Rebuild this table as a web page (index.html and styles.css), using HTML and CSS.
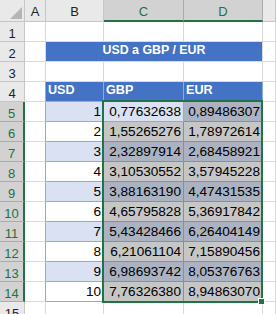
FILE: index.html
```html
<!DOCTYPE html>
<html>
<head>
    <title>USD a GBP / EUR</title>
    <link rel="stylesheet" href="styles.css">
</head>
<body>
    <div class="sheet">
        <!-- column headers -->
        <div class="corner">
            <svg width="24" height="21" viewBox="0 0 24 21"><polygon points="22,7 22,19 10,19" fill="#b5b5b5"/></svg>
        </div>
        <div class="ch">A</div>
        <div class="ch">B</div>
        <div class="ch ch-sel">C</div>
        <div class="ch ch-sel">D</div>
        <div class="ch"></div>

        <!-- row 1 -->
        <div class="rh">1</div>
        <div class="c"></div><div class="c"></div><div class="c"></div><div class="c"></div><div class="c"></div>

        <!-- row 2 -->
        <div class="rh">2</div>
        <div class="c"></div>
        <div class="c title">USD a GBP / EUR</div>
        <div class="c"></div>

        <!-- row 3 -->
        <div class="rh">3</div>
        <div class="c"></div><div class="c"></div><div class="c"></div><div class="c"></div><div class="c"></div>

        <!-- row 4 -->
        <div class="rh">4</div>
        <div class="c edge"></div>
        <div class="c head">USD</div>
        <div class="c head">GBP</div>
        <div class="c head">EUR</div>
        <div class="c"></div>

        <div class="rh rh-sel">5</div>
        <div class="c edge"></div>
        <div class="c t band num">1</div>
        <div class="c t band num">0,77632638</div>
        <div class="c t band sel num">0,89486307</div>
        <div class="c"></div>

        <div class="rh rh-sel">6</div>
        <div class="c edge"></div>
        <div class="c t num">2</div>
        <div class="c t sel num">1,55265276</div>
        <div class="c t sel num">1,78972614</div>
        <div class="c"></div>

        <div class="rh rh-sel">7</div>
        <div class="c edge"></div>
        <div class="c t band num">3</div>
        <div class="c t band sel num">2,32897914</div>
        <div class="c t band sel num">2,68458921</div>
        <div class="c"></div>

        <div class="rh rh-sel">8</div>
        <div class="c edge"></div>
        <div class="c t num">4</div>
        <div class="c t sel num">3,10530552</div>
        <div class="c t sel num">3,57945228</div>
        <div class="c"></div>

        <div class="rh rh-sel">9</div>
        <div class="c edge"></div>
        <div class="c t band num">5</div>
        <div class="c t band sel num">3,88163190</div>
        <div class="c t band sel num">4,47431535</div>
        <div class="c"></div>

        <div class="rh rh-sel">10</div>
        <div class="c edge"></div>
        <div class="c t num">6</div>
        <div class="c t sel num">4,65795828</div>
        <div class="c t sel num">5,36917842</div>
        <div class="c"></div>

        <div class="rh rh-sel">11</div>
        <div class="c edge"></div>
        <div class="c t band num">7</div>
        <div class="c t band sel num">5,43428466</div>
        <div class="c t band sel num">6,26404149</div>
        <div class="c"></div>

        <div class="rh rh-sel">12</div>
        <div class="c edge"></div>
        <div class="c t num">8</div>
        <div class="c t sel num">6,21061104</div>
        <div class="c t sel num">7,15890456</div>
        <div class="c"></div>

        <div class="rh rh-sel">13</div>
        <div class="c edge"></div>
        <div class="c t band num">9</div>
        <div class="c t band sel num">6,98693742</div>
        <div class="c t band sel num">8,05376763</div>
        <div class="c"></div>

        <div class="rh rh-sel">14</div>
        <div class="c edge"></div>
        <div class="c t num">10</div>
        <div class="c t sel num">7,76326380</div>
        <div class="c t sel num">8,94863070</div>
        <div class="c"></div>

        <!-- row 15 (cut off) -->
        <div class="rh">15</div>
        <div class="c"></div><div class="c"></div><div class="c"></div><div class="c"></div><div class="c"></div>

        <!-- selection C5:D14 -->
        <div class="selection"></div>
        <div class="fill-handle"></div>
    </div>
</body>
</html>
```

FILE: styles.css
```css
body {
    margin: 0;
    padding: 0;
    width: 276px;
    height: 314px;
    overflow: hidden;
    background-color: #fff;
    font-family: 'Liberation Sans', Arial, sans-serif;
    color: #000;
}
.sheet {
    position: relative;
    display: grid;
    grid-template-columns: 25px 21px 58px 80px 79px 13px;
    grid-template-rows: 22px repeat(15, 20px);
}
.c {
    box-sizing: border-box;
    border-right: 1px solid #dadada;
    border-bottom: 1px solid #dadada;
    display: flex;
    align-items: flex-end;
    padding: 0 2px 1px 2px;
    font-size: 13.6px;
    line-height: 17px;
    white-space: nowrap;
    overflow: hidden;
}

/* headers */
.corner,
.ch,
.rh {
    box-sizing: border-box;
    background-color: #e9e9e9;
    border-right: 1px solid #c6c6c6;
    border-bottom: 1px solid #c6c6c6;
    color: #222;
    font-size: 13px;
    display: flex;
    align-items: center;
    justify-content: center;
}
.corner {
    display: block;
}
.corner svg {
    display: block;
}
.ch {
    padding-top: 2px;
}
.ch-sel {
    background-color: #d2d2d2;
    color: #217346;
    border-bottom: 2px solid #217346;
    border-right-color: #ababab;
}
.rh {
    padding-top: 3px;
}
.rh-sel {
    background-color: #d2d2d2;
    color: #217346;
    border-right: 2px solid #217346;
    border-bottom-color: #ababab;
}

/* table */
.title {
    grid-column: span 3;
    justify-content: center;
    background-color: #4472c4;
    color: #fff;
    font-weight: bold;
    font-size: 12.4px;
    padding-bottom: 2px;
}
.head {
    background-color: #4472c4;
    border-right-color: #8ea9db;
    border-bottom-color: #8ea9db;
    color: #fff;
    font-weight: bold;
    font-size: 12.6px;
    padding-bottom: 2px;
}
.edge {
    border-right-color: #8ea9db;
}
.t {
    border-right-color: #8ea9db;
    border-bottom-color: #8ea9db;
}
.band {
    background-color: #d9e1f2;
}
.num {
    justify-content: flex-end;
}
.t.sel {
    background-color: #c6c6c6;
    border-right-color: #7f8fae;
    border-bottom-color: #7f8fae;
}
.t.band.sel {
    background-color: #abb2c1;
}

/* selection frame */
.selection {
    position: absolute;
    left: 102px;
    top: 100px;
    width: 161px;
    height: 203px;
    box-sizing: border-box;
    border: 2px solid #217346;
}
.fill-handle {
    position: absolute;
    left: 258px;
    top: 298px;
    width: 5px;
    height: 5px;
    background-color: #217346;
    border: 1px solid #fff;
}
```
